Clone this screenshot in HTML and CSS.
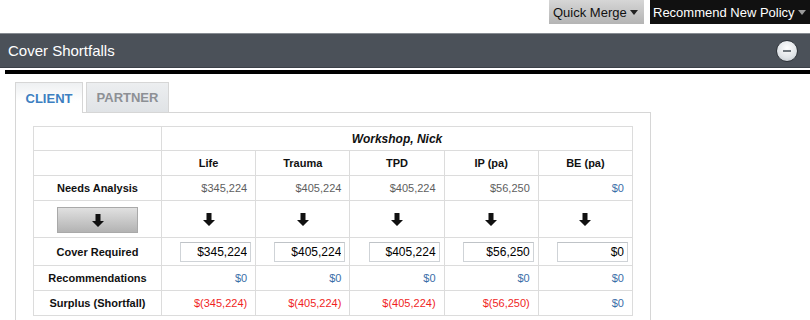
FILE: index.html
```html
<!DOCTYPE html>
<html lang="en">
<head>
  <meta charset="UTF-8">
  <title>Cover Shortfalls</title>
  <link rel="stylesheet" href="styles.css">
</head>
<body>
  <div class="toolbar">
    <button class="tool-btn light">Quick Merge <span class="caret"></span></button>
    <button class="tool-btn dark">Recommend New Policy<span class="caret"></span></button>
  </div>

  <div class="section-header">
    <h2>Cover Shortfalls</h2>
    <span class="collapse-btn"><span class="minus"></span></span>
  </div>
  <div class="rule"></div>

  <div class="tabs">
    <div class="tab active">CLIENT</div>
    <div class="tab">PARTNER</div>
  </div>
  <div class="panel">
    <table class="grid">
      <colgroup>
        <col class="label-col">
        <col><col><col><col><col>
      </colgroup>
      <tr class="row-name">
        <td></td>
        <th colspan="5"><em>Workshop, Nick</em></th>
      </tr>
      <tr class="row-head">
        <td></td>
        <th>Life</th>
        <th>Trauma</th>
        <th>TPD</th>
        <th>IP (pa)</th>
        <th>BE (pa)</th>
      </tr>
      <tr class="row-val">
        <th>Needs Analysis</th>
        <td class="grey">$345,224</td>
        <td class="grey">$405,224</td>
        <td class="grey">$405,224</td>
        <td class="grey">$56,250</td>
        <td class="blue">$0</td>
      </tr>
      <tr class="row-arrow">
        <td><button class="copy-btn"><svg width="12" height="14" viewBox="0 0 12 14"><polygon points="3.5,0 8.5,0 8.5,7 12,7 6,13 0,7 3.5,7" fill="#111"/></svg></button></td>
        <td><svg width="12" height="14" viewBox="0 0 12 14"><polygon points="3.5,0 8.5,0 8.5,7 12,7 6,13 0,7 3.5,7" fill="#111"/></svg></td>
        <td><svg width="12" height="14" viewBox="0 0 12 14"><polygon points="3.5,0 8.5,0 8.5,7 12,7 6,13 0,7 3.5,7" fill="#111"/></svg></td>
        <td><svg width="12" height="14" viewBox="0 0 12 14"><polygon points="3.5,0 8.5,0 8.5,7 12,7 6,13 0,7 3.5,7" fill="#111"/></svg></td>
        <td><svg width="12" height="14" viewBox="0 0 12 14"><polygon points="3.5,0 8.5,0 8.5,7 12,7 6,13 0,7 3.5,7" fill="#111"/></svg></td>
        <td><svg width="12" height="14" viewBox="0 0 12 14"><polygon points="3.5,0 8.5,0 8.5,7 12,7 6,13 0,7 3.5,7" fill="#111"/></svg></td>
      </tr>
      <tr class="row-input">
        <th>Cover Required</th>
        <td><input type="text" value="$345,224"></td>
        <td><input type="text" value="$405,224"></td>
        <td><input type="text" value="$405,224"></td>
        <td><input type="text" value="$56,250"></td>
        <td><input type="text" value="$0"></td>
      </tr>
      <tr class="row-val">
        <th>Recommendations</th>
        <td class="blue">$0</td>
        <td class="blue">$0</td>
        <td class="blue">$0</td>
        <td class="blue">$0</td>
        <td class="blue">$0</td>
      </tr>
      <tr class="row-val">
        <th>Surplus (Shortfall)</th>
        <td class="red">$(345,224)</td>
        <td class="red">$(405,224)</td>
        <td class="red">$(405,224)</td>
        <td class="red">$(56,250)</td>
        <td class="blue">$0</td>
      </tr>
    </table>
  </div>
</body>
</html>
```

FILE: styles.css
```css
* {
  box-sizing: border-box;
}
body {
  margin: 0;
  font-family: "Liberation Sans", Arial, sans-serif;
  background: #fff;
  overflow: hidden;
}

/* top buttons */
.toolbar {
  display: flex;
  justify-content: flex-end;
  gap: 6px;
  height: 24px;
}
.tool-btn {
  font-family: inherit;
  font-size: 13px;
  height: 24px;
  border: none;
  padding: 0 4px 0 4px;
  display: flex;
  align-items: center;
  cursor: pointer;
}
.tool-btn.light {
  width: 95px;
  background: linear-gradient(#d6d6d6, #b4b4b4);
  color: #111;
}
.tool-btn.dark {
  width: 160px;
  background: #111;
  color: #fff;
  padding-left: 3px;
}
.caret {
  display: inline-block;
  width: 0;
  height: 0;
  margin-left: 3px;
  border-left: 4px solid transparent;
  border-right: 4px solid transparent;
  border-top: 5px solid #222;
}
.tool-btn.dark .caret {
  border-top-color: #9a9a9a;
}

/* section header */
.section-header {
  margin-top: 9px;
  height: 35px;
  background: #4b5159;
  border-top: 1px solid #868b91;
  border-bottom: 1px solid #3b4047;
  display: flex;
  align-items: center;
  justify-content: space-between;
  padding: 0 12px 0 8px;
}
.section-header h2 {
  margin: 0;
  font-size: 15px;
  font-weight: normal;
  color: #fff;
}
.collapse-btn {
  width: 22px;
  height: 22px;
  border-radius: 50%;
  background: radial-gradient(circle at 50% 35%, #ffffff, #dfe3e7 60%, #b9bfc5);
  border: 1px solid #2f343a;
  display: flex;
  align-items: center;
  justify-content: center;
}
.collapse-btn .minus {
  width: 8px;
  height: 2px;
  background: #6f767d;
}
.rule {
  margin: 2px 0 0 5px;
  height: 4px;
  background: #000;
}

/* tabs */
.tabs {
  display: flex;
  gap: 3px;
  margin: 8px 0 0 15px;
  position: relative;
  z-index: 1;
}
.tab {
  width: 83px;
  height: 30px;
  border: 1px solid #d6d6d6;
  border-bottom: none;
  font-size: 13px;
  font-weight: bold;
  display: flex;
  align-items: center;
  justify-content: center;
  color: #8d9095;
  background: linear-gradient(#eceef0, #e0e3e6);
}
.tab.active {
  width: 68px;
  height: 31px;
  margin-bottom: -1px;
  color: #3d7fc1;
  background: linear-gradient(#eef0f2, #ffffff 60%);
}
.panel {
  margin-left: 15px;
  width: 636px;
  border: 1px solid #d6d6d6;
  border-bottom: none;
  padding: 13px 17px 10px 17px;
}

/* table */
.grid {
  border-collapse: collapse;
  width: 600px;
  table-layout: fixed;
  font-size: 11px;
}
.grid .label-col {
  width: 128px;
}
.grid td,
.grid th {
  border: 1px solid #dcdcdc;
  padding: 0 8px;
}
.grid th {
  font-weight: bold;
  color: #111;
  text-align: center;
}
.grid td {
  text-align: right;
}
.row-name {
  height: 24px;
}
.row-name th {
  font-size: 12px;
}
.row-head {
  height: 25px;
}
.row-val {
  height: 25px;
}
.row-arrow {
  height: 37px;
}
.row-arrow td {
  text-align: center;
  padding-top: 1px;
}
.row-arrow svg {
  display: block;
  margin: 0 auto;
}
.copy-btn {
  width: 81px;
  height: 26px;
  border: 1px solid #a9a9a9;
  background: linear-gradient(#e0e0e0, #b3b3b3);
  display: block;
  margin: 0 auto;
  padding: 0;
  padding-top: 2px;
  cursor: pointer;
}
.row-input {
  height: 28px;
}
.row-input td {
  padding: 0 4px 0 0;
}
.row-input input {
  width: 71px;
  height: 20px;
  font-family: inherit;
  font-size: 12px;
  color: #000;
  text-align: right;
  border: 1px solid #cfd3d7;
  border-top-color: #bfc3c7;
  padding: 0 3px;
  margin-top: 1px;
}
.grey {
  color: #5e5e5e;
}
.blue {
  color: #3a6ea8;
}
.red {
  color: #f01f1f;
}
```
